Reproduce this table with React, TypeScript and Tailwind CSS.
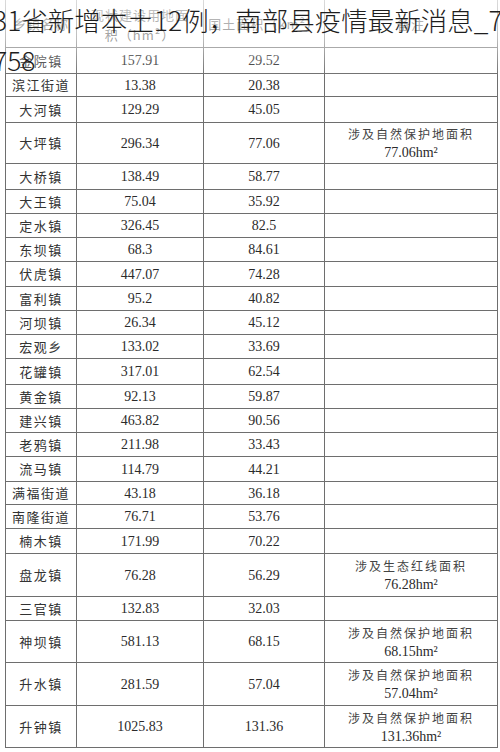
import React from "react";

type Row = {
    name: string;
    area: string;
    land: string;
    note?: string[];
    h: number;
};

const rows: Row[] = [
    { name: "金院镇", area: "157.91", land: "29.52", h: 26 },
    { name: "滨江街道", area: "13.38", land: "20.38", h: 23 },
    { name: "大河镇", area: "129.29", land: "45.05", h: 26 },
    { name: "大坪镇", area: "296.34", land: "77.06", note: ["涉及自然保护地面积", "77.06hm²"], h: 41 },
    { name: "大桥镇", area: "138.49", land: "58.77", h: 26 },
    { name: "大王镇", area: "75.04", land: "35.92", h: 24 },
    { name: "定水镇", area: "326.45", land: "82.5", h: 24 },
    { name: "东坝镇", area: "68.3", land: "84.61", h: 24 },
    { name: "伏虎镇", area: "447.07", land: "74.28", h: 25 },
    { name: "富利镇", area: "95.2", land: "40.82", h: 24 },
    { name: "河坝镇", area: "26.34", land: "45.12", h: 24 },
    { name: "宏观乡", area: "133.02", land: "33.69", h: 24 },
    { name: "花罐镇", area: "317.01", land: "62.54", h: 26 },
    { name: "黄金镇", area: "92.13", land: "59.87", h: 24 },
    { name: "建兴镇", area: "463.82", land: "90.56", h: 24 },
    { name: "老鸦镇", area: "211.98", land: "33.43", h: 24 },
    { name: "流马镇", area: "114.79", land: "44.21", h: 25 },
    { name: "满福街道", area: "43.18", land: "36.18", h: 23 },
    { name: "南隆街道", area: "76.71", land: "53.76", h: 24 },
    { name: "楠木镇", area: "171.99", land: "70.22", h: 25 },
    { name: "盘龙镇", area: "76.28", land: "56.29", note: ["涉及生态红线面积", "76.28hm²"], h: 43 },
    { name: "三官镇", area: "132.83", land: "32.03", h: 24 },
    { name: "神坝镇", area: "581.13", land: "68.15", note: ["涉及自然保护地面积", "68.15hm²"], h: 42 },
    { name: "升水镇", area: "281.59", land: "57.04", note: ["涉及自然保护地面积", "57.04hm²"], h: 43 },
    { name: "升钟镇", area: "1025.83", land: "131.36", note: ["涉及自然保护地面积", "131.36hm²"], h: 42 },
];

const cjk = "font-['Noto_Sans_CJK_SC',sans-serif]";
const serif = "font-['Liberation_Serif','Noto_Sans_CJK_SC',serif]";

export default function App() {
    return (
        <div className="relative w-[500px] h-[752px] overflow-hidden bg-white">
            <div className="ml-[5px] mt-[-8px] w-[493px] border-l border-r border-[#6e6e6e] text-[#2b2b2b]">
                {/* Header */}
                <div className="flex h-[56px] border-b border-[#6e6e6e]">
                    <div className={`w-[71px] pt-[8px] border-r border-[#6e6e6e] flex items-center justify-center text-[13px] tracking-[1px] ${cjk}`}>
                        乡镇名称
                    </div>
                    <div className={`w-[127px] pb-[2px] border-r border-[#6e6e6e] flex flex-col items-center justify-end text-[13px] leading-[20px] tracking-[1px] ${cjk}`}>
                        <span>现状建设用地面</span>
                        <span>积（hm²）</span>
                    </div>
                    <div className={`w-[121px] pt-[8px] border-r border-[#6e6e6e] flex items-center justify-center text-[13px] tracking-[1px] ${cjk}`}>
                        国土面积（km²）
                    </div>
                    <div className={`flex-1 pt-[8px] flex items-center justify-center text-[13px] tracking-[1px] ${cjk}`}>
                        备注
                    </div>
                </div>

                {rows.map((r) => (
                    <div
                        key={r.name}
                        className="flex border-b border-[#6e6e6e]"
                        style={{ height: r.h }}
                    >
                        <div className={`w-[71px] border-r border-[#6e6e6e] flex items-center justify-center text-[13px] tracking-[1.5px] text-[#333] ${cjk}`}>
                            {r.name}
                        </div>
                        <div className={`w-[127px] border-r border-[#6e6e6e] flex items-center justify-center text-[14px] ${serif}`}>
                            {r.area}
                        </div>
                        <div className={`w-[121px] border-r border-[#6e6e6e] flex items-center justify-center text-[14px] ${serif}`}>
                            {r.land}
                        </div>
                        <div className="flex-1 flex flex-col items-center justify-center">
                            {r.note && (
                                <>
                                    <span className={`text-[12px] leading-[19px] tracking-[2px] text-[#444] ${cjk}`}>{r.note[0]}</span>
                                    <span className={`text-[14px] leading-[19px] ${serif}`}>{r.note[1]}</span>
                                </>
                            )}
                        </div>
                    </div>
                ))}
            </div>

            {/* faded top edge of the scan */}
            <div className="absolute left-0 top-0 w-full h-[76px] bg-linear-to-b from-white/75 via-white/55 to-white/0" />

            {/* Title overlay */}
            <div className={`absolute top-0 left-[-7px] text-[26.5px] leading-[40px] text-[#1e1e1e] font-light whitespace-nowrap ${cjk}`}>
                <div>31省新增本土12例，南部县疫情最新消息_71</div>
                <div>758</div>
            </div>
        </div>
    );
}
